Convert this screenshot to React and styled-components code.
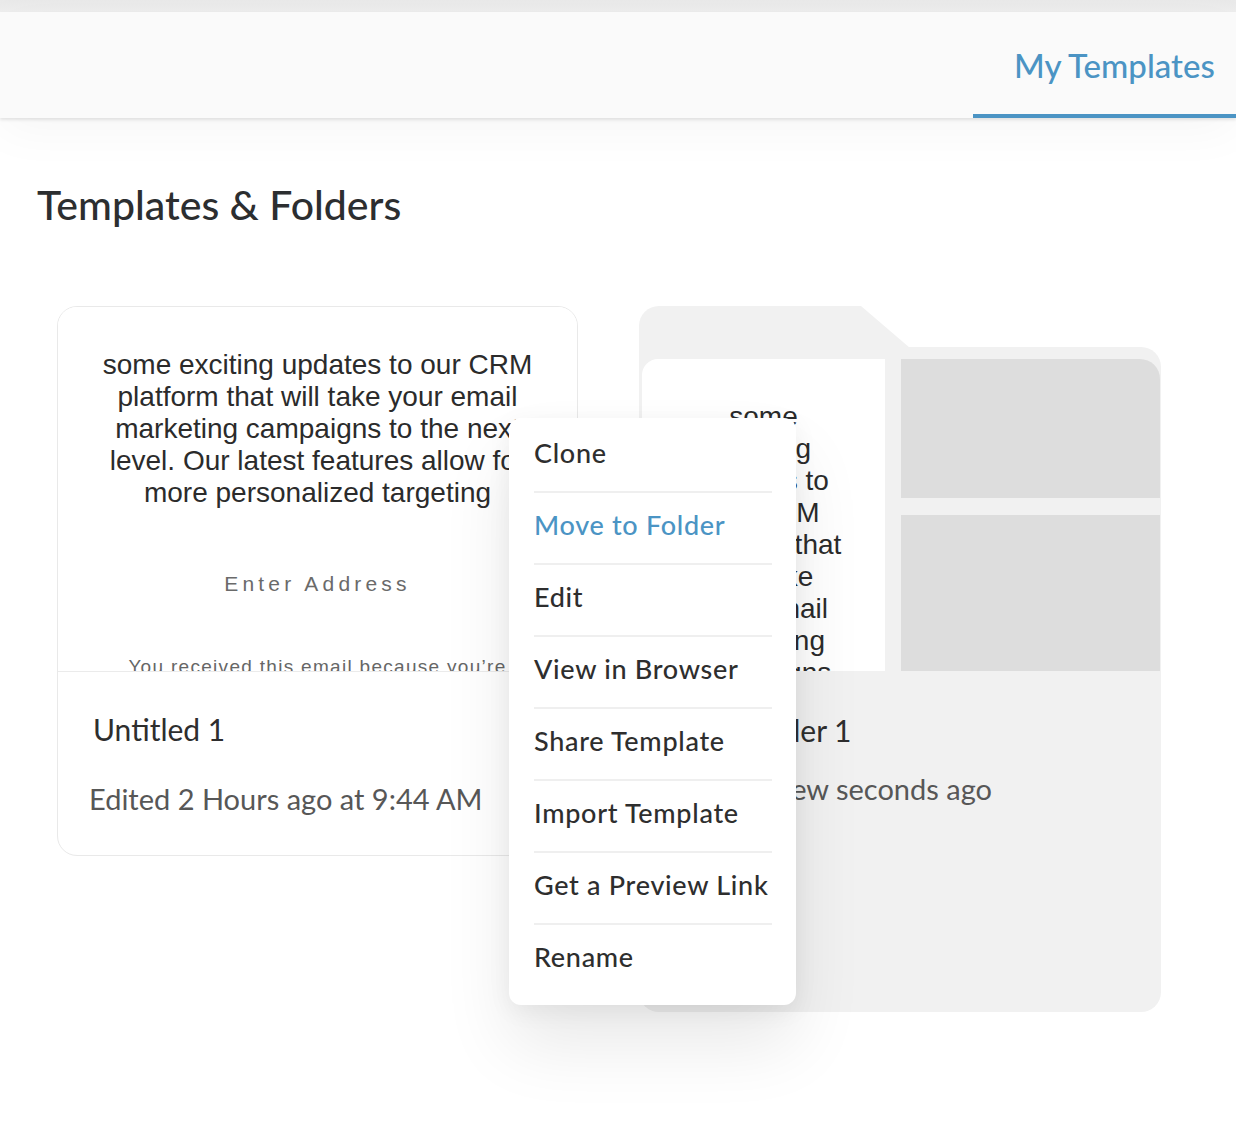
import React from "react";
import styled, { createGlobalStyle } from "styled-components";

const GlobalStyle = createGlobalStyle`
	html, body {
		margin: 0;
		padding: 0;
		background: #ffffff;
	}
	body {
		font-family: "Lato", "Open Sans", sans-serif;
		color: #2f3133;
	}
	* {
		box-sizing: border-box;
	}
`;

const BLUE = "#4b94c4";

const EMAIL_TEXT =
	"some exciting updates to our CRM platform that will take your email marketing campaigns to the next level. Our latest features allow for more personalized targeting";

const MENU_ITEMS = [
	{ label: "Clone" },
	{ label: "Move to Folder", active: true },
	{ label: "Edit" },
	{ label: "View in Browser" },
	{ label: "Share Template" },
	{ label: "Import Template" },
	{ label: "Get a Preview Link" },
	{ label: "Rename" },
];

const Page = styled.div`
	min-height: 1126px;
	overflow: hidden;
`;

const TopStrip = styled.div`
	height: 12px;
	background: linear-gradient(to bottom, #e9e9e9, #eeeeee);
`;

const Header = styled.header`
	position: relative;
	z-index: 1;
	display: flex;
	justify-content: flex-end;
	height: 106px;
	background: #fafafa;
	box-shadow: 0 2px 3px rgba(0, 0, 0, 0.1), 0 12px 50px rgba(0, 0, 0, 0.04);
`;

const HeaderTab = styled.div`
	display: flex;
	align-items: center;
	width: 263px;
	padding: 4px 0 0 41px;
	border-bottom: 4px solid ${BLUE};
	color: ${BLUE};
	font-size: 33px;
	font-weight: 500;
`;

const Main = styled.main`
	padding: 0 37px;
`;

const Title = styled.h1`
	margin: 63px 0 0;
	font-size: 41px;
	line-height: 48px;
	font-weight: 500;
	color: #2c2e30;
`;

const CardsRow = styled.div`
	position: relative;
	display: flex;
	align-items: flex-start;
	gap: 61px;
	margin: 77px 0 0 20px;
`;

const TemplateCard = styled.div`
	width: 521px;
	height: 550px;
	border: 1px solid #e9e9e9;
	border-radius: 20px;
	overflow: hidden;
	background: #ffffff;
`;

const EmailPreview = styled.div`
	height: ${(p) => p.$height}px;
	padding: ${(p) => p.$top}px 42px 0;
	overflow: hidden;
	background: #ffffff;
	text-align: center;
	font-family: "Liberation Sans", Arial, sans-serif;
	border-radius: ${(p) => (p.$rounded ? "16px 0 0 0" : "0")};
`;

const EmailBody = styled.p`
	margin: 0;
	font-size: 28px;
	line-height: 32px;
	color: #2b2b2b;
`;

const EmailAddress = styled.div`
	margin-top: 63px;
	font-size: 21px;
	line-height: 24px;
	letter-spacing: 4.2px;
	color: #6a6a6a;
`;

const EmailFooter = styled.div`
	margin-top: 59px;
	font-size: 19px;
	line-height: 24px;
	letter-spacing: 1.3px;
	color: #666666;
`;

const CardFooter = styled.div`
	padding: ${(p) => p.$top}px 0 0 ${(p) => p.$left}px;
	border-top: ${(p) => (p.$bordered ? "1px solid #ebebeb" : "none")};
`;

const CardName = styled.div`
	padding-left: 4px;
	font-size: 30px;
	line-height: 36px;
	color: #2e2e2e;
`;

const CardMeta = styled.div`
	margin-top: ${(p) => p.$gap}px;
	font-size: 29px;
	line-height: 34px;
	color: #575757;
`;

const FolderCard = styled.div`
	display: flex;
	flex-direction: column;
	width: 522px;
	height: 706px;
`;

const FolderTab = styled.div`
	width: 271px;
	height: 42px;
	margin-bottom: -1px;
	background: #f1f1f1;
	border-top-left-radius: 20px;
	clip-path: polygon(0 0, 222px 0, 271px 100%, 0 100%);
`;

const FolderBody = styled.div`
	flex: 1;
	padding: 12px 2px 0 3px;
	background: #f1f1f1;
	border-radius: 0 20px 20px 20px;
`;

const FolderPreview = styled.div`
	display: grid;
	grid-template-columns: 243px 259px;
	column-gap: 16px;
	height: 312px;
`;

const TileStack = styled.div`
	display: grid;
	grid-template-rows: 139px 156px;
	row-gap: 17px;
`;

const Tile = styled.div`
	background: #dddddd;
	border-top-right-radius: ${(p) => (p.$first ? "20px" : "0")};
`;

const Menu = styled.ul`
	position: absolute;
	z-index: 5;
	left: 452px;
	top: 112px;
	width: 287px;
	margin: 0;
	padding: 3px 24px 10px 25px;
	list-style: none;
	background: #ffffff;
	border-radius: 12px;
	box-shadow: 0 40px 70px rgba(0, 0, 0, 0.09), 0 6px 24px rgba(0, 0, 0, 0.06);
`;

const MenuItem = styled.li`
	display: flex;
	align-items: center;
	height: 72px;
	padding-bottom: 8px;
	border-bottom: 2px solid #efefef;
	font-size: 27px;
	font-weight: 500;
	letter-spacing: 0.7px;
	color: ${(p) => (p.$active ? BLUE : "#2e2e2e")};
	white-space: nowrap;

	&:last-child {
		height: 70px;
		border-bottom: none;
	}
`;

function Email({ height, top, rounded }) {
	return (
		<EmailPreview $height={height} $top={top} $rounded={rounded}>
			<EmailBody>{EMAIL_TEXT}</EmailBody>
			<EmailAddress>Enter Address</EmailAddress>
			<EmailFooter>
				You received this email because you’re subscribed to our updates.
			</EmailFooter>
		</EmailPreview>
	);
}

export default function App() {
	return (
		<Page>
			<GlobalStyle />
			<TopStrip />
			<Header>
				<HeaderTab>My Templates</HeaderTab>
			</Header>
			<Main>
				<Title>Templates &amp; Folders</Title>
				<CardsRow>
					<TemplateCard>
						<Email height={364} top={42} />
						<CardFooter $bordered $top={39} $left={31}>
							<CardName>Untitled 1</CardName>
							<CardMeta $gap={35}>Edited 2 Hours ago at 9:44 AM</CardMeta>
						</CardFooter>
					</TemplateCard>

					<FolderCard>
						<FolderTab />
						<FolderBody>
							<FolderPreview>
								<Email height={312} top={42} rounded />
								<TileStack>
									<Tile $first />
									<Tile />
								</TileStack>
							</FolderPreview>
							<CardFooter $top={41} $left={29}>
								<CardName>New Folder 1</CardName>
								<CardMeta $gap={24}>Edited a few seconds ago</CardMeta>
							</CardFooter>
						</FolderBody>
					</FolderCard>

					<Menu>
						{MENU_ITEMS.map((item) => (
							<MenuItem key={item.label} $active={item.active}>
								{item.label}
							</MenuItem>
						))}
					</Menu>
				</CardsRow>
			</Main>
		</Page>
	);
}
